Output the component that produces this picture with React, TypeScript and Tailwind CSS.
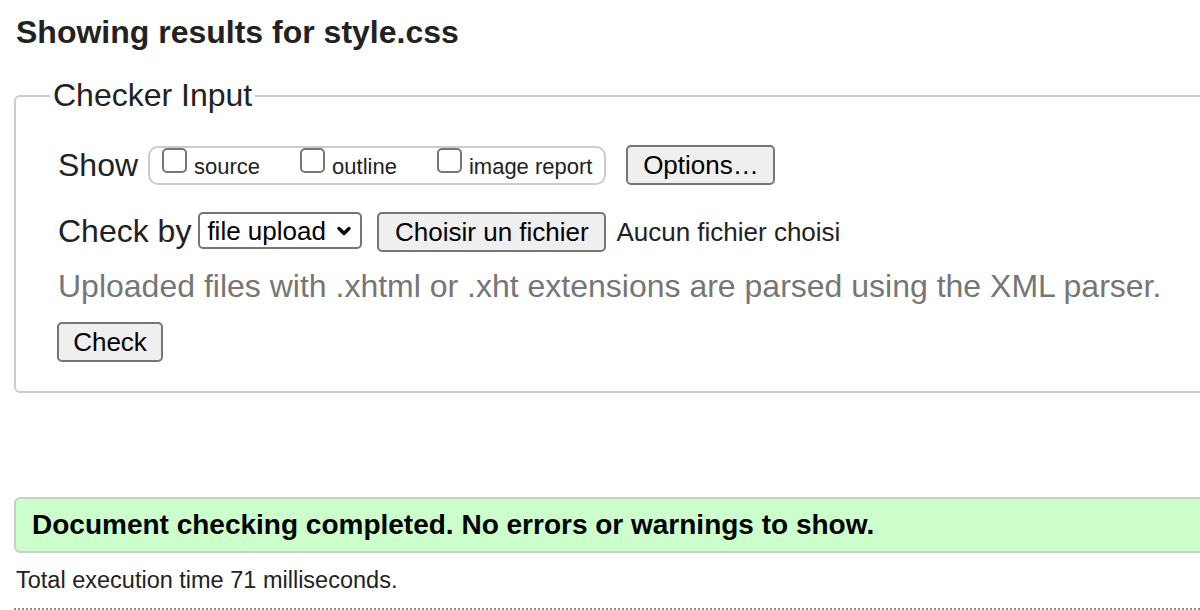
import { ChevronDown } from 'lucide-react';

const options = ['source', 'outline', 'image report'];

export default function App() {
  return (
    <div className="w-full h-[610px] overflow-hidden bg-white text-[#222] font-['Liberation_Sans',Arial,sans-serif]">
      <div className="w-[1260px] pl-[14px]">
        {/* Title */}
        <h2 className="pt-[14px] pl-[2px] text-[32px] leading-[37px] font-bold">Showing results for style.css</h2>

        {/* Checker input */}
        <fieldset className="mt-[26px] border-2 border-[#ccc] rounded-[6px] pl-[42px] pb-[29px]">
          <legend className="-ml-[8px] px-[3px] text-[32px] leading-[37px]">Checker Input</legend>

          <div className="mt-[31px] flex items-center h-[40px]">
            <span className="text-[32px] leading-[37px]">Show</span>
            <div className="ml-[10px] h-[39px] border-2 border-[#ccc] rounded-[10px] flex items-start pl-[12px] pr-[12px] gap-[40px]">
              {options.map((o) => (
                <label key={o} className="flex items-start">
                  <span className="w-[25px] h-[25px] border-2 border-[#767676] rounded-[5px] bg-white"></span>
                  <span className="ml-[7px] mt-[8px] text-[22px] leading-[22px]">{o}</span>
                </label>
              ))}
            </div>
            <button className="ml-[20px] w-[149px] h-[40px] bg-[#efefef] border-2 border-[#767676] rounded-[5px] text-[26px] leading-[30px] text-black">
              Options…
            </button>
          </div>

          <div className="mt-[27px] flex items-start">
            <span className="text-[32px] leading-[37px] mt-[1px]">Check by</span>
            <div className="ml-[7px] w-[164px] h-[37px] border-2 border-[#767676] rounded-[5px] flex items-center pl-[7px] pr-[6px] text-[26px] leading-[30px] text-black">
              <span className="flex-1">file upload</span>
              <ChevronDown className="w-[20px] h-[20px]" strokeWidth={4} />
            </div>
            <button className="ml-[15px] w-[229px] h-[40px] bg-[#efefef] border-2 border-[#767676] rounded-[5px] text-[26px] leading-[30px] text-black">
              Choisir un fichier
            </button>
            <span className="ml-[10px] mt-[5px] text-[26px] leading-[30px]">Aucun fichier choisi</span>
          </div>

          <p className="mt-[16px] text-[32px] leading-[37px] text-[#767676]">
            Uploaded files with .xhtml or .xht extensions are parsed using the XML parser.
          </p>

          <button className="mt-[17px] -ml-[1px] w-[106px] h-[40px] bg-[#efefef] border-2 border-[#767676] rounded-[5px] text-[26px] leading-[30px] text-black">
            Check
          </button>
        </fieldset>

        {/* Result */}
        <div className="mt-[104px] h-[56px] border-2 border-[#ccc] rounded-[6px] bg-[#cfc] flex items-center pl-[16px]">
          <span className="text-[28px] leading-[32px] font-bold text-black">Document checking completed. No errors or warnings to show.</span>
        </div>
        <p className="mt-[14px] pl-[2px] text-[23.5px] leading-[27px]">Total execution time 71 milliseconds.</p>
        <div className="mt-[14px] border-t-2 border-dotted border-[#888]"></div>
      </div>
    </div>
  );
}
